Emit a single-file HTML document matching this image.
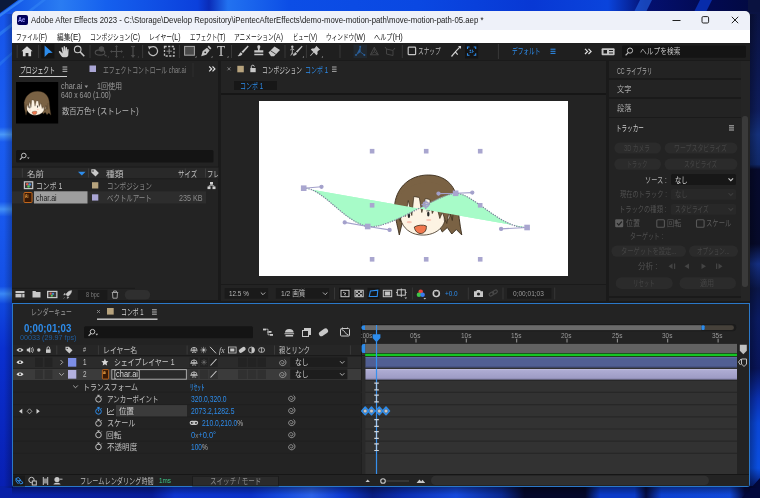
<!DOCTYPE html>
<html lang="ja">
<head>
<meta charset="utf-8">
<title>Adobe After Effects 2023</title>
<style>
*{box-sizing:border-box;margin:0;padding:0}
html,body{width:760px;height:498px;overflow:hidden;background:#0a3bd0}
body{position:relative;font-family:"Liberation Sans","Noto Sans CJK JP",sans-serif;font-size:8px;color:#b4b4b4;line-height:1}
.a{position:absolute}
.t{position:absolute;white-space:nowrap;transform-origin:0 50%;transform:scaleX(.74);line-height:10px;height:10px;font-size:8px}
#wall{position:absolute;left:0;top:0;width:760px;height:498px}
#win{position:absolute;left:12px;top:11px;width:737.6px;height:476px;background:#1a1a1a;border-radius:5px 5px 3px 3px;overflow:hidden}
/* coordinates inside #win are offset by (-12,-11); use #abs wrapper instead */
#abs{position:absolute;left:-12px;top:-11px;width:760px;height:498px;will-change:transform}
#title{left:12px;top:11px;width:738px;height:19px;background:#eef1f9}
#menu{left:12px;top:30px;width:738px;height:12.5px;background:#fff}
#tool{left:12px;top:42.5px;width:738px;height:17.5px;background:#1f1f1f}
.panel{background:#232323}
.m{top:31.5px;color:#111;font-size:8px;transform:scaleX(.76)}
.c{display:flex;justify-content:center;transform-origin:50% 50%;color:#454545;font-size:8.5px}
.r{display:flex;justify-content:flex-end;transform-origin:100% 50%;font-size:8.5px}
.rl{top:330.500px;color:#9a9a9a;font-size:7.500px;transform:scaleX(.8)}
.dim{color:#7d7d7d}
.blue{color:#2d8ceb}
.dk{color:#1a1a1a}
</style>
</head>
<body>
<svg id="wall" viewBox="0 0 760 498">
<defs>
<linearGradient id="gtop" x1="0" x2="1" y1="0" y2="0">
<stop offset="0" stop-color="#0d4fe6"/><stop offset=".08" stop-color="#2a7cf2"/><stop offset=".14" stop-color="#1560ee"/><stop offset=".26" stop-color="#0b40dc"/><stop offset=".275" stop-color="#0a2cb8"/><stop offset=".30" stop-color="#2272f0"/><stop offset=".38" stop-color="#0c4ee6"/><stop offset=".55" stop-color="#0a48e2"/><stop offset=".70" stop-color="#0838d4"/><stop offset=".80" stop-color="#0a44dc"/><stop offset=".85" stop-color="#041070"/><stop offset=".93" stop-color="#020a52"/><stop offset="1" stop-color="#02093f"/>
</linearGradient>
<linearGradient id="gleft" x1="0" x2="0" y1="0" y2="1">
<stop offset="0" stop-color="#1654ea"/><stop offset=".255" stop-color="#1a5cf0"/><stop offset=".27" stop-color="#4a98f8"/><stop offset=".285" stop-color="#1a5cf0"/><stop offset=".405" stop-color="#1858ee"/><stop offset=".42" stop-color="#4290f6"/><stop offset=".435" stop-color="#1858ee"/><stop offset=".575" stop-color="#1450e6"/><stop offset=".59" stop-color="#3a88f6"/><stop offset=".61" stop-color="#1048e0"/><stop offset=".70" stop-color="#0a30d0"/><stop offset="1" stop-color="#081eb0"/>
</linearGradient>
<linearGradient id="gright" x1="0" x2="0" y1="0" y2="1">
<stop offset="0" stop-color="#0a1240"/><stop offset=".15" stop-color="#0c1850"/><stop offset=".22" stop-color="#0e1c5a"/><stop offset=".27" stop-color="#14307a"/><stop offset=".33" stop-color="#102868"/><stop offset=".34" stop-color="#060a2c"/><stop offset=".49" stop-color="#060a2a"/><stop offset=".53" stop-color="#142e80"/><stop offset=".58" stop-color="#0a1648"/><stop offset=".64" stop-color="#0a1a60"/><stop offset=".74" stop-color="#081458"/><stop offset=".80" stop-color="#0a30b0"/><stop offset=".85" stop-color="#0a46d6"/><stop offset=".94" stop-color="#0a4ee0"/><stop offset=".965" stop-color="#082a90"/><stop offset="1" stop-color="#03083c"/>
</linearGradient>
<linearGradient id="gbot" x1="0" x2="1" y1="0" y2="0">
<stop offset="0" stop-color="#0820a8"/><stop offset=".20" stop-color="#081c98"/><stop offset=".23" stop-color="#0c34d0"/><stop offset=".33" stop-color="#0a30c8"/><stop offset=".37" stop-color="#1448dc"/><stop offset=".41" stop-color="#2a60e8"/><stop offset=".45" stop-color="#0c38d0"/><stop offset=".49" stop-color="#081c80"/><stop offset=".53" stop-color="#0a2cb0"/><stop offset=".60" stop-color="#1448dc"/><stop offset=".66" stop-color="#0a2890"/><stop offset=".69" stop-color="#04082a"/><stop offset=".77" stop-color="#04082a"/><stop offset=".79" stop-color="#0a3ac8"/><stop offset=".835" stop-color="#0a3ac8"/><stop offset=".85" stop-color="#050c40"/><stop offset=".87" stop-color="#0c40d0"/><stop offset=".96" stop-color="#1048d8"/><stop offset=".98" stop-color="#03083c"/><stop offset="1" stop-color="#02083c"/>
</linearGradient>
<linearGradient id="shl" x1="0" x2="1"><stop offset="0" stop-color="#000" stop-opacity="0"/><stop offset="1" stop-color="#000" stop-opacity=".28"/></linearGradient>
<linearGradient id="shb" x1="0" x2="0" y1="0" y2="1"><stop offset="0" stop-color="#000" stop-opacity=".35"/><stop offset="1" stop-color="#000" stop-opacity="0"/></linearGradient>
</defs>
<rect x="0" y="0" width="760" height="498" fill="#0a3ed6"/>
<rect x="0" y="0" width="14" height="498" fill="url(#gleft)"/>
<rect x="748" y="0" width="12" height="498" fill="url(#gright)"/>
<rect x="0" y="0" width="760" height="12" fill="url(#gtop)"/>
<rect x="0" y="486" width="760" height="12" fill="url(#gbot)"/>
<polygon points="0,0 18,0 0,13" fill="#0b1a3c"/>
<polygon points="20,0 24,0 0,17 0,14" fill="#3a8af6" opacity=".8"/>
<polygon points="42,0 46,0 0,36 0,32" fill="#2f80f4" opacity=".7"/>
<polygon points="0,62 14,50 14,53 0,66" fill="#2a78f0" opacity=".6"/>
<polygon points="748,0 760,0 760,12 748,12" fill="#0a1240"/>
<polygon points="700,0 712,0 706,12 694,12" fill="#0a34c0" opacity=".8"/>
<polygon points="640,0 652,0 646,12 634,12" fill="#2468ea" opacity=".6"/>
<polygon points="742,498 760,478 760,498" fill="#02083c"/>
<rect x="4" y="14" width="9" height="474" fill="url(#shl)"/>
<rect x="12" y="487" width="738" height="8" fill="url(#shb)"/>
<rect x="750" y="14" width="8" height="474" fill="url(#shl)" transform="rotate(180 754 251)"/>

</svg>
<svg width="0" height="0" style="position:absolute"><defs>
<g id="head">
<path d="M5 60.500C3 50 -.5 40 .5 29C3 12 16 .5 34 .5C50 .5 61 10 63 26C64 38 65.500 50 67.500 60.500L62 55L57.500 59.500L53 53L48 57.500L44 50L8 48Z" fill="#7a6244" stroke="#3a2c1c" stroke-width=".9" stroke-linejoin="round"/>
<path d="M5.500 34C4.500 44 8 53 16 57.500C22 61 31 61.500 38 59C45 56.500 50 51 51 44L50 26L12 20Z" fill="#fdf3e3" stroke="#3a2c1c" stroke-width=".8"/>
<path d="M50 38.500C53 36.500 56 38.500 55.500 42C55 45 52 47 50 46Z" fill="#fdf3e3" stroke="#3a2c1c" stroke-width=".8"/>
<path d="M1 30C4 17 18 8 34 8C49 8 59 17 60 30L58 46L55 36L52.500 49L48 38L45.500 44L42 30L38 39L35.500 25L31 24L27.500 38L25 23L19.500 22L17.500 41L14 26L11 42L8 33L6 47L3.500 40Z" fill="#7a6244"/>
<path d="M60 30L58 46L55 36L52.500 49L48 38L45.500 44L42 30L38 39L35.500 25L31 24L27.500 38L25 23L19.500 22L17.500 41L14 26L11 42L8 33L6 47L3.500 40L1 30" fill="none" stroke="#3a2c1c" stroke-width=".7" stroke-linejoin="round"/>
<ellipse cx="14.600" cy="41" rx="1.200" ry="2.600" fill="#262626"/><ellipse cx="34" cy="39.500" rx="1.200" ry="2.600" fill="#262626"/>
<path d="M12.500 37.800l3.500-.8M32 36.500l3.800-.5" stroke="#262626" stroke-width=".7"/>
<ellipse cx="15" cy="47.700" rx="2.600" ry="1.100" fill="#f7b9a8" opacity=".8"/><ellipse cx="34.400" cy="45.500" rx="2.600" ry="1.100" fill="#f7b9a8" opacity=".8"/>
<path d="M20 52.500C23 50.500 29 50 32 51.500C32.500 55.500 30.500 58.500 27 59C23.500 59.500 20.500 56.500 20 52.500Z" fill="#f2784e" stroke="#3a2c1c" stroke-width=".8"/>
</g>
</defs></svg>
<div id="win"><div id="abs">
<div id="title" class="a"></div>
<div id="menu" class="a"></div>
<div id="tool" class="a"></div>
<div class="a" style="left:17px;top:15px;width:10.5px;height:10px;background:#00005b;border-radius:2px"></div>
<div id="t1" class="t" style="left:18.2px;top:15px;font-size:7px;font-weight:bold;color:#9a9aff;transform:scaleX(.82);letter-spacing:-.2px">Ae</div>
<div class="t" id="ttl" style="left:31px;top:15.5px;font-size:8.2px;color:#1b1b1b;transform:scaleX(.952)">Adobe After Effects 2023 - C:\Storage\Develop Repository\iPentecAfterEffects\demo-move-motion-path\move-motion-path-05.aep *</div>
<svg class="a" style="left:665px;top:11px" width="85" height="19" viewBox="0 0 85 19"><g fill="none" stroke="#222" stroke-width="1"><path d="M7.5 9.5h8"/><rect x="37" y="5.6" width="6.6" height="6.4" rx="1.2"/><path d="M66.8 5.8l6.4 6.4M73.2 5.8l-6.4 6.4"/></g></svg>
<!--TITLE-->
<div id="t3" class="t m" style="left:15.8px;;transform:scaleX(0.701)">ファイル<span style="font-size:9.6px">(F)</span></div>
<div id="t4" class="t m" style="left:56.6px;;transform:scaleX(0.830)">編集<span style="font-size:9.6px">(E)</span></div>
<div id="t5" class="t m" style="left:89.5px;;transform:scaleX(0.721)">コンポジション<span style="font-size:9.6px">(C)</span></div>
<div id="t6" class="t m" style="left:149.0px;;transform:scaleX(0.724)">レイヤー<span style="font-size:9.6px">(L)</span></div>
<div id="t7" class="t m" style="left:189.5px;;transform:scaleX(0.679)">エフェクト<span style="font-size:9.6px">(T)</span></div>
<div id="t8" class="t m" style="left:234.4px;;transform:scaleX(0.715)">アニメーション<span style="font-size:9.6px">(A)</span></div>
<div id="t9" class="t m" style="left:292.5px;;transform:scaleX(0.658)">ビュー<span style="font-size:9.6px">(V)</span></div>
<div id="t10" class="t m" style="left:325.8px;;transform:scaleX(0.707)">ウィンドウ<span style="font-size:9.6px">(W)</span></div>
<div id="t11" class="t m" style="left:374.2px;;transform:scaleX(0.772)">ヘルプ<span style="font-size:9.6px">(H)</span></div>
<!--MENU-->
<svg class="a" style="left:12px;top:42px" width="738" height="19" viewBox="12 42 738 19">
<g stroke="#383838" stroke-width="1" fill="none">
<path d="M17.2 45v13M38.6 45v13M90 45v13M142.6 45v13M179.4 45v13M231.5 45v13M285 45v13M306.4 45v13M340 45v13M402.3 45v13M498.4 44v15"/>
</g>
<!-- home -->
<path d="M27 46.3l5.6 5h-1.5v4.9h-2.7v-3.2h-2.8v3.2h-2.7v-4.9h-1.5z" fill="#d6d6d6"/>
<!-- selection -->
<rect x="41.2" y="44" width="13.2" height="14.5" fill="#141414"/>
<path d="M44.6 45.5L52.7 52.8L48.6 53L44.6 57.1Z" fill="#2d8ceb"/>
<!-- hand -->
<path d="M60.3 51.2c-.9-.6-1.9.2-1.3 1.2l2.300 3.600c.5.8 1.300 1.200 2.200 1.200h2.600c1.300 0 2.100-.9 2.200-2.200l.3-5.200c.1-1-1.200-1.100-1.300-.1l-.2 2.100l-.1-4.100c0-1-1.400-1-1.400 0l-.1 3.600l-.5-4.500c-.1-1-1.500-.9-1.400.1l.2 4.500l-.9-3.700c-.2-.9-1.500-.6-1.300.3l1 5.400z" fill="#cfcfcf"/>
<!-- zoom -->
<circle cx="77.700" cy="49.400" r="3.300" fill="none" stroke="#c8c8c8" stroke-width="1.100"/><path d="M80.200 52l4.100 4.300" stroke="#c8c8c8" stroke-width="1.600"/>
<!-- orbit dim -->
<g fill="none" stroke="#4c4c4c" stroke-width="1.100"><ellipse cx="100" cy="52.500" rx="4.800" ry="2.600"/><circle cx="101.500" cy="49" r="2.200" fill="#4c4c4c"/><path d="M104.500 54.800l2 1.500"/></g>
<g stroke="#4c4c4c" stroke-width="1.200" fill="#4c4c4c"><path d="M116.500 46v11M111 51.500h11"/><path d="M116.500 45l1.500 2h-3zM116.500 58l1.500-2h-3zM110 51.500l2-1.500v3zM123 51.500l-2-1.500v3z" stroke="none"/></g>
<g stroke="#4c4c4c" stroke-width="1.200" fill="#4c4c4c"><path d="M133 46v10"/><path d="M133 58l2.200-3h-4.400z" stroke="none"/><path d="M131 46.500h4" /></g>
<path d="M107.500 57.500h1.500v-1.500zM122.500 57.500h1.500v-1.500zM137.500 57.500h1.500v-1.500z" fill="#4c4c4c"/>
<!-- rotate -->
<path d="M150.200 47.600a4.500 4.500 0 1 1 -1.600 3.900" fill="none" stroke="#bdbdbd" stroke-width="1.200"/><path d="M148 46.200l3.600.3l-2.300 2.900z" fill="#bdbdbd"/>
<!-- pan behind -->
<rect x="164.500" y="46.500" width="9.500" height="9.500" fill="none" stroke="#c0c0c0" stroke-width="1.300" stroke-dasharray="2.200 1.400"/><path d="M166.500 51.200h5.500M169.200 48.500v5.500" stroke="#8a8a8a" stroke-width="1"/>
<!-- rect -->
<rect x="184.600" y="46.400" width="9.800" height="8.800" fill="#4a4a4a" stroke="#a8a8a8" stroke-width="1"/><path d="M195 57.500h1.500v-1.500z" fill="#aaa"/>
<!-- pen -->
<path d="M201.200 56.300l1.500-5.300l4.300-3.300l2.600 2.700l-3.300 4.300zM207.600 46.800l1.200-1.200l2.600 2.700l-1.200 1.200z" fill="#c4c4c4"/><circle cx="205.200" cy="52.300" r=".9" fill="#1f1f1f"/><path d="M211 57.500h1.500v-1.500z" fill="#aaa"/>
<path d="M227 57.500h1.500v-1.500z" fill="#aaa"/>
<!-- brush -->
<path d="M247.800 45.600l.9.800l-5.600 6.600l-1.600-1.300zM240.700 52.300l1.800 1.500c-.4 1.700-2.400 2.500-5 2.300c1.700-.6 1.700-2.700 3.200-3.800z" fill="#c8c8c8"/>
<!-- stamp -->
<path d="M257.300 46.500c0-1.700 3-1.700 3 0c0 1.200-.8 2.400-.8 3.800h3.800v2.200h-9v-2.200h3.800c0-1.400-.8-2.600-.8-3.800zM254.300 53.800h9v1.500h-9z" fill="#c8c8c8"/>
<!-- eraser -->
<path d="M268.500 52.600l6-6.200l5.500 3.600l-6 6.200h-3z" fill="#c8c8c8"/><path d="M270.500 50.700l5.300 3.500" stroke="#1f1f1f" stroke-width=".8"/>
<!-- roto -->
<path d="M301.800 45.800l.8.700l-5.200 6.200l-1.500-1.200zM295.200 52l1.700 1.400c-.4 1.500-2 2.200-4.200 2c1.300-.6 1.300-2.300 2.500-3.400z" fill="#c0c0c0"/><circle cx="292.300" cy="46.800" r="1.200" fill="#c0c0c0"/><path d="M290.300 50l2-1.500l2 1.500M292.300 48.500v4l-1.500 3M292.300 52.500l1.500 3" stroke="#c0c0c0" stroke-width=".9" fill="none"/><path d="M302.500 57.500h1.500v-1.500z" fill="#aaa"/>
<!-- pin -->
<path d="M316.200 45.800l4 4l-1.300.5l-1.500 1.500l.2 2.200l-1.200 1.200l-2.500-2.600l-3.200 3.400l-.6-.5l3.200-3.400l-2.500-2.500l1.200-1.200l2.200.2l1.500-1.500z" fill="#c8c8c8"/><path d="M321.500 57.500h1.500v-1.500z" fill="#aaa"/>
<!-- axis modes -->
<rect x="353.400" y="44.500" width="13.600" height="13.600" fill="#232f3d" opacity=".55"/>
<g stroke="#2a5f9a" stroke-width=".8" fill="#2a5f9a"><path d="M360.200 47v4.800l-4 3M360.200 51.800l4 3"/><circle cx="360.200" cy="46.800" r="1" stroke="none"/><circle cx="356" cy="55" r="1" stroke="none"/><circle cx="364.400" cy="55" r="1" stroke="none"/></g>
<g stroke="#444" stroke-width="1" fill="none"><path d="M374.300 47v4.800l-4 3M374.300 51.800l4 3M370.300 54.800l4-7.500l4 7.500z"/></g>
<g stroke="#444" stroke-width="1" fill="none"><path d="M386.500 49l6.500 1.500v5l-6.500-1.500zM393 50.500l2-2.500M386.500 49l-1.500-2"/></g>
<!-- snap -->
<rect x="408.200" y="47.100" width="7.400" height="7.600" fill="none" stroke="#c4c4c4" stroke-width="1.200" rx=".8"/>
<path d="M451.500 56.500l3.800-4.600l2.400 2.800M455.300 51.900l4.500-4.800" fill="none" stroke="#d0d0d0" stroke-width="1.200"/><path d="M458 46h3v3z" fill="#d0d0d0"/>
<rect x="465" y="44" width="13.200" height="14.500" fill="#141414"/>
<g fill="none" stroke="#2d8ceb" stroke-width="1.100"><path d="M467.500 49v-2h2M473.700 47h2v2M475.700 53.300v2h-2M469.500 55.300h-2v-2"/><path d="M470.200 50.200h2.800v2.200h-2.800z" stroke-dasharray="1 .8"/></g>
<!-- workspace -->
<path d="M550.500 49.200h5M550.500 51.300h5M550.500 53.400h5" stroke="#2d8ceb" stroke-width="1"/>
<path d="M585 48.800l2.600 2.600l-2.600 2.600M588.500 48.800l2.600 2.600l-2.600 2.600" fill="none" stroke="#e0e0e0" stroke-width="1.200"/>
<rect x="601.600" y="48.300" width="13" height="7" rx="1" fill="#c6c6c6"/><rect x="603.500" y="50" width="3.500" height="3.500" fill="#1f1f1f"/><path d="M609 50.500h4M609 53h4" stroke="#1f1f1f" stroke-width="1"/>
<rect x="622" y="45.500" width="124" height="12.200" rx="1.500" fill="#141414"/>
<circle cx="630" cy="50.600" r="2.600" fill="none" stroke="#c0c0c0" stroke-width="1"/><path d="M628.200 52.600l-2.600 2.800" stroke="#c0c0c0" stroke-width="1.200"/>
</svg>
<div id="t12" class="t" style="left:216.500px;top:44.500px;font-family:'Liberation Serif',serif;font-size:14px;line-height:14px;height:14px;color:#cfcfcf;transform:scaleX(.95)">T</div>
<div id="t13" class="t" style="left:417.6px;top:46.300px;color:#b8b8b8;font-size:8.500px;transform:scaleX(0.667)">スナップ</div>
<div id="t14" class="t blue" style="left:512.4px;top:46.300px;font-size:8.500px;transform:scaleX(0.668)">デフォルト</div>
<div id="t15" class="t" style="left:640.3px;top:46.300px;color:#c0c0c0;font-size:8.500px;transform:scaleX(0.794)">ヘルプを検索</div>
<!--TOOLBAR-->
<div class="a panel" style="left:12px;top:61px;width:206.200px;height:239px"></div>
<!-- tab row -->
<div id="t16" class="t" style="left:20.0px;top:64.500px;color:#d8d8d8;font-size:8.500px;transform:scaleX(0.686)">プロジェクト</div>
<div class="a" style="left:19px;top:76px;width:48px;height:1.200px;background:#d0d0d0"></div>
<svg class="a" style="left:12px;top:61px" width="207" height="240" viewBox="12 61 207 240">
<path d="M62.500 67h4.800M62.500 69.200h4.800M62.500 71.400h4.800" stroke="#b8b8b8" stroke-width="1"/>
<rect x="89.500" y="65.500" width="6.500" height="6.500" fill="#a9a5d4"/>
<path d="M193 63v14" stroke="#2e2e2e" stroke-width="1"/>
<path d="M209.200 66.500l2.400 2.400l-2.400 2.400M212.500 66.500l2.400 2.400l-2.400 2.400" fill="none" stroke="#e0e0e0" stroke-width="1.200"/>
<!-- thumbnail -->
<rect x="16" y="82" width="42.200" height="41.500" fill="#000"/>
<g transform="translate(24,91) scale(.4)"><use href="#head"/></g>
<path d="M84.500 85.500h3.600l-1.800 2.400z" fill="#9a9a9a"/>
<!-- search -->
<rect x="16" y="150" width="197.500" height="12.500" rx="1.500" fill="#141414"/>
<circle cx="23.800" cy="155.500" r="2.300" fill="none" stroke="#c0c0c0" stroke-width="1"/><path d="M22.200 157.300l-2.300 2.400" stroke="#c0c0c0" stroke-width="1.100"/><path d="M27 157.500h2.600l-1.300 1.600z" fill="#c0c0c0"/>
<!-- header -->
<rect x="12" y="166.600" width="206.500" height="12.600" fill="#191919"/><rect x="12" y="167.500" width="206.500" height="10.900" fill="#292929"/>
<path d="M22.300 168.500v9M88.500 168.500v9M185.300 168.500v9M205.500 168.500v9" stroke="#3c3c3c" stroke-width="1"/>
<path d="M78 171.800h7.600l-3.800 3.700z" fill="#2d8ceb"/>
<path d="M91.300 169.200h3.800l3.800 3.800l-3.400 3.400l-4.200-3.800z" fill="#c8c8c8"/><circle cx="93" cy="171" r=".8" fill="#292929"/>
<!-- row 2 highlight -->
<rect x="12" y="191.300" width="194" height="12.200" fill="#2d2d2d"/>
<rect x="34" y="191.300" width="53.500" height="12.200" fill="#9e9e9e"/>
<!-- comp icon -->
<rect x="23.800" y="181.200" width="9.500" height="8" fill="#c8c8c8"/><rect x="25" y="182.400" width="7.100" height="5.600" fill="#3b3b3b"/><circle cx="27.300" cy="184.300" r="1.300" fill="#e05a4a"/><circle cx="29.800" cy="184.500" r="1.300" fill="#4a8de0"/><circle cx="28.500" cy="186.500" r="1.300" fill="#5ac45a"/>
<!-- ai icon -->
<rect x="24" y="192.500" width="8" height="10" rx="1" fill="#3a1a06" stroke="#e8791d" stroke-width=".8"/>
<rect x="92" y="182.200" width="6.300" height="6.300" fill="#b7a37d"/>
<rect x="92" y="194.300" width="6.300" height="6.300" fill="#a9a5d4"/>
<!-- flowchart icon -->
<g fill="#d0d0d0"><rect x="210" y="182" width="3" height="2.600"/><rect x="207.500" y="186.500" width="3" height="2.600"/><rect x="212.500" y="186.500" width="3" height="2.600"/><path d="M211.200 184.500v1.200h-2.200v1h.6M211.800 184.500v1.200h2.200v1" stroke="#d0d0d0" stroke-width=".7" fill="none"/></g>
<!-- footer -->
<path d="M12 288.300h123" stroke="#1a1a1a" stroke-width="1"/>
<g fill="#c8c8c8">
<rect x="15.500" y="291" width="9" height="2.200"/><rect x="15.500" y="294" width="6" height="3.400"/><rect x="22.300" y="294" width="2.200" height="3.400"/>
<path d="M32.500 291h3l.8 1h4.200v5.600h-8z"/>
<rect x="47" y="290.800" width="10.500" height="7.400"/>
<path d="M71.500 290.500c-2.600.2-4.500 1.800-5.600 4l1.800 1.800c2.200-1.100 3.800-3 4-5.600zM65.300 294.800l-1.700.3l1.300-2zM67.400 296.900l-.3 1.700l2-1.300zM64.800 297.200l-1.300 1.500" stroke="#c8c8c8" stroke-width=".4"/>
</g>
<rect x="48.300" y="292" width="7.900" height="5" fill="#3b3b3b"/><circle cx="50.700" cy="293.700" r="1.100" fill="#e05a4a"/><circle cx="53" cy="293.800" r="1.100" fill="#4a8de0"/><circle cx="51.800" cy="295.700" r="1.100" fill="#5ac45a"/>
<rect x="77.800" y="289.800" width="29.500" height="10" fill="#1a1a1a"/>
<g fill="none" stroke="#a0a0a0" stroke-width="1"><path d="M111.800 292.500h6.400M113.600 292.300v-1.300h2.800v1.300M112.500 292.800l.4 5.400h4.200l.4-5.400"/></g>
<rect x="124.700" y="290" width="25.500" height="9.600" rx="4.800" fill="#2f2f2f"/>
</svg>
<div id="t17" class="t dim" style="left:103.0px;top:64.500px;font-size:8.500px;color:#858585;transform:scaleX(0.686)">エフェクトコントロール char.ai</div>
<div id="t18" class="t" style="left:61.2px;top:80.500px;color:#9a9a9a;font-size:8.500px;transform:scaleX(0.858)">char.ai</div>
<div id="t19" class="t" style="left:96.8px;top:80.500px;color:#9a9a9a;font-size:8.500px;transform:scaleX(0.833)">1回使用</div>
<div id="t20" class="t" style="left:61.2px;top:89.500px;color:#9a9a9a;font-size:8.500px;transform:scaleX(0.804)">640 x 640 (1.00)</div>
<div id="t21" class="t" style="left:62.0px;top:105.500px;color:#b8b8b8;font-size:8.500px;transform:scaleX(0.858)">数百万色+ (ストレート)</div>
<div id="t22" class="t" style="left:26.7px;top:168.500px;color:#c0c0c0;font-size:8.500px;transform:scaleX(0.987)">名前</div>
<div id="t23" class="t" style="left:106.0px;top:168.500px;color:#c0c0c0;font-size:8.500px;transform:scaleX(1.034)">種類</div>
<div id="t24" class="t" style="left:177.9px;top:168.500px;color:#c0c0c0;font-size:8.500px;transform:scaleX(0.756)">サイズ</div>
<div id="t25" class="t" style="left:207px;top:168.500px;color:#c0c0c0;font-size:8.500px;width:15px;overflow:hidden">フレ</div>
<div id="t26" class="t" style="left:35.8px;top:180.800px;color:#c4c4c4;font-size:8.500px;transform:scaleX(0.804)">コンポ 1</div>
<div id="t27" class="t" style="left:106.7px;top:180.800px;color:#8c8c8c;font-size:8.500px;transform:scaleX(0.753)">コンポジション</div>
<div id="t28" class="t" style="left:36.4px;top:193px;color:#1c1c1c;font-size:8.500px;transform:scaleX(0.822)">char.ai</div>
<div id="t29" class="t" style="left:106.7px;top:193px;color:#8c8c8c;font-size:8.500px;transform:scaleX(0.759)">ベクトルアート</div>
<div id="t30" class="t" style="left:178.8px;top:193px;color:#8c8c8c;font-size:8.500px;transform:scaleX(0.846)">235 KB</div>
<div id="t31" class="t" style="left:25.300px;top:193.500px;color:#ffb04a;font-size:4.500px;font-weight:bold;line-height:6px;height:6px">Ai</div>
<div id="t32" class="t" style="left:85.8px;top:290px;color:#7a7a7a;font-size:7px;transform:scaleX(0.794)">8 bpc</div>
<!--PROJECT-->
<div class="a panel" style="left:220.500px;top:61px;width:385.500px;height:239.500px"></div>
<div class="a" style="left:220.500px;top:93px;width:385.500px;height:1.500px;background:#161616"></div>
<div class="a" style="left:220.500px;top:284px;width:385.500px;height:1.200px;background:#1a1a1a"></div>
<div class="a" style="left:234px;top:80.700px;width:43px;height:9.800px;background:#171717"></div>
<div class="a" style="left:258.500px;top:101px;width:309.300px;height:174.700px;background:#fff"></div>
<svg class="a" style="left:220px;top:61px" width="386" height="240" viewBox="220 61 386 240">
<path d="M227.500 67.300l3 3M230.500 67.300l-3 3" stroke="#8a8a8a" stroke-width=".9"/>
<rect x="237.300" y="65.800" width="6.500" height="6.500" fill="#b7a37d"/>
<rect x="250.300" y="68" width="5.400" height="4.200" fill="#c8c8c8"/><path d="M251.300 68v-1.300a1.500 1.500 0 0 1 3 0" fill="none" stroke="#c8c8c8" stroke-width=".9"/>
<path d="M332 67h4.600M332 69.200h4.600M332 71.400h4.600" stroke="#a8a8a8" stroke-width="1"/>
<!-- motion path shape -->
<path d="M303.700 188.200C321.500 186.800 344.700 222.400 367.700 226.500C389.600 229.900 438.500 193.600 455.600 193.300C472.300 192.600 501.100 228.900 527.100 227.500Z" fill="#a7fbc8"/>
<!-- head -->
<g transform="translate(394.300,174.500)"><use href="#head"/></g>
<path d="M303.700 188.200C321.500 186.800 344.700 222.400 367.700 226.500C389.600 229.900 438.500 193.600 455.600 193.300C472.300 192.600 501.100 228.900 527.100 227.500Z" fill="#a7fbc8" opacity=".0"/>
<path d="M303.700 188.200C321.500 186.800 344.700 222.400 367.700 226.500C389.600 229.900 438.500 193.600 455.600 193.300C472.300 192.600 501.100 228.900 527.100 227.500Z" fill="#a7fbc8"/>
<path d="M303.700 188.200C321.500 186.800 344.700 222.400 367.700 226.500C389.600 229.900 438.500 193.600 455.600 193.300C472.300 192.600 501.100 228.900 527.100 227.500" fill="none" stroke="#807e9e" stroke-width="1.200" stroke-dasharray="1.300 1.100"/>
<g stroke="#a3a0cb" stroke-width="1.100" fill="#a3a0cb">
<path d="M303.700 188.200L321.500 186.800M344.700 222.400L367.700 226.500L389.600 229.900M438.500 193.600L455.600 193.300L472.300 192.600M501.100 228.900L527.100 227.500" fill="none"/>
<circle cx="321.500" cy="186.800" r="1.600"/><circle cx="344.700" cy="222.400" r="1.600"/><circle cx="389.600" cy="229.900" r="1.600"/><circle cx="438.500" cy="193.600" r="1.600"/><circle cx="472.300" cy="192.600" r="1.600"/><circle cx="501.100" cy="228.900" r="1.600"/>
</g>
<g fill="#a9a6cf">
<rect x="300.900" y="185.400" width="5.600" height="5.600"/><rect x="364.900" y="223.700" width="5.600" height="5.600"/><rect x="452.800" y="190.500" width="5.600" height="5.600"/><rect x="524.300" y="224.700" width="5.600" height="5.600"/>
<rect x="369.800" y="148.900" width="4.600" height="4.600"/><rect x="423.900" y="148.900" width="4.600" height="4.600"/><rect x="477.900" y="148.900" width="4.600" height="4.600"/>
<rect x="369.800" y="203" width="4.600" height="4.600"/><rect x="477.900" y="203" width="4.600" height="4.600"/>
<rect x="369.800" y="257" width="4.600" height="4.600"/><rect x="423.900" y="257" width="4.600" height="4.600"/><rect x="477.900" y="257" width="4.600" height="4.600"/>
</g>
<g fill="none" stroke="#a19ec8" stroke-width="1.300"><circle cx="425.800" cy="204.600" r="2.600"/><path d="M425.800 200.300v8.600M421.500 204.600h8.600"/></g>
<!-- footer -->
<rect x="224.700" y="288.200" width="43.500" height="10.500" fill="#1a1a1a"/>
<rect x="275.800" y="288.200" width="53.400" height="10.500" fill="#1a1a1a"/>
<path d="M260.800 292.500l2.200 2.200l2.200-2.200M323 292.500l2.200 2.200l2.200-2.200" fill="none" stroke="#b0b0b0" stroke-width="1"/>
<path d="M334.500 287.500v12M412.400 287.500v12M468.300 287.500v12M503 287.500v12M554.700 287.500v12" stroke="#363636" stroke-width="1"/>
<rect x="339" y="287.800" width="12" height="11.200" fill="#161616"/>
<rect x="367.500" y="287.800" width="12" height="11.200" fill="#161616"/>
<g fill="none" stroke="#c8c8c8" stroke-width="1">
<rect x="341" y="290.300" width="8" height="6.400"/><path d="M343 292.200l3 1.300l-1.500.5l.8 1.500" stroke-width=".8"/>
<rect x="355" y="290.300" width="8.200" height="6.400"/>
<rect x="383.300" y="290.300" width="8.400" height="6.400"/><rect x="385.300" y="292" width="4.400" height="3" fill="#c8c8c8"/>
<rect x="397.300" y="289.800" width="8" height="5.400"/><path d="M401.300 288.500v8.500M396 292.500h1.300M405.300 292.500h1.300" stroke-width=".9"/>
</g>
<g fill="#c8c8c8"><rect x="356" y="291.200" width="2" height="1.600"/><rect x="360" y="291.200" width="2" height="1.600"/><rect x="358" y="292.800" width="2" height="1.600"/><rect x="356" y="294.300" width="2" height="1.600"/><rect x="360" y="294.300" width="2" height="1.600"/></g>
<path d="M369.200 296.500l1.200-5.500l7.400-.8l-.6 6.300z" fill="none" stroke="#2d8ceb" stroke-width="1.100"/>
<path d="M404.500 297.500h2.600l-1.300 1.500z" fill="#c8c8c8"/>
<circle cx="420.700" cy="291.800" r="2.300" fill="#e8433a"/><circle cx="419" cy="294.800" r="2.300" fill="#3fc64a"/><circle cx="422.600" cy="294.800" r="2.300" fill="#3b7cf0"/><path d="M423.500 298h2.600l-1.300 1.500z" fill="#c8c8c8"/>
<circle cx="436.300" cy="293.500" r="3" fill="none" stroke="#c8c8c8" stroke-width="1.600"/><path d="M434.500 291.500l2 2M438.500 292l-2.500 1.500M436 296l.5-2.500" stroke="#232323" stroke-width=".7"/>
<path d="M474 291.300h2.200l.8-1.200h3l.8 1.200h2.200v5.700h-9z" fill="#c8c8c8"/><circle cx="478.500" cy="294" r="1.600" fill="#232323"/>
<g fill="none" stroke="#484848" stroke-width="1.200"><rect x="489" y="292.500" width="5" height="3" rx="1.500" transform="rotate(-35 491.500 294)"/><rect x="492.500" y="290.500" width="5" height="3" rx="1.500" transform="rotate(-35 495 292)"/></g>
<rect x="507.200" y="288.200" width="44.200" height="10.500" fill="#1a1a1a"/>
</svg>
<div id="t33" class="t" style="left:262.0px;top:64.500px;color:#c8c8c8;font-size:8.500px;transform:scaleX(0.672)">コンポジション</div>
<div id="t34" class="t blue" style="left:304.7px;top:64.500px;font-size:8.500px;transform:scaleX(0.706)">コンポ 1</div>
<div id="t35" class="t blue" style="left:240.0px;top:80.600px;font-size:8.500px;transform:scaleX(0.706)">コンポ 1</div>
<div id="t36" class="t" style="left:229.2px;top:288.500px;color:#b8b8b8;font-size:8px;transform:scaleX(0.795)">12.5 %</div>
<div id="t37" class="t" style="left:281.0px;top:288.500px;color:#b8b8b8;font-size:8px;transform:scaleX(0.835)">1/2 画質</div>
<div id="t38" class="t blue" style="left:444.8px;top:288.500px;font-size:8px;transform:scaleX(0.804)">+0.0</div>
<div id="t39" class="t" style="left:513.3px;top:288.500px;color:#9a9a9a;font-size:8px;transform:scaleX(0.817)">0;00;01;03</div>
<!--COMP-->
<div class="a panel" style="left:608.500px;top:61px;width:132.500px;height:17.200px"></div>
<div class="a panel" style="left:608.500px;top:79.800px;width:132.500px;height:17.700px"></div>
<div class="a panel" style="left:608.500px;top:99.100px;width:132.500px;height:17.700px"></div>
<div class="a panel" style="left:608.500px;top:118.400px;width:132.500px;height:177.900px"></div>
<div class="a" style="left:741px;top:61px;width:9px;height:239.500px;background:#252525"></div>
<div class="a" style="left:742.300px;top:116px;width:5.400px;height:171px;background:#3a3a3a;border-radius:2.700px"></div>
<div class="a" style="left:608.500px;top:297.500px;width:132.500px;height:3px;background:#232323"></div>
<svg class="a" style="left:608px;top:61px" width="142" height="240" viewBox="608 61 142 240">
<path d="M729 125.800h5M729 127.900h5M729 130h5" stroke="#b8b8b8" stroke-width="1"/>
<g fill="#2b2b2b">
<rect x="614.300" y="142.400" width="46.700" height="11.200" rx="5.600"/><rect x="664.600" y="142.400" width="72.800" height="11.200" rx="5.600"/>
<rect x="614.300" y="158.600" width="46.700" height="11.200" rx="5.600"/><rect x="664.600" y="158.600" width="72.800" height="11.200" rx="5.600"/>
<rect x="611.400" y="245.500" width="74.600" height="11.300" rx="5.600"/><rect x="689" y="245.500" width="49" height="11.300" rx="5.600"/>
<rect x="615.700" y="277.300" width="57" height="11.800" rx="5.900"/><rect x="679.500" y="277.300" width="56.500" height="11.800" rx="5.900"/>
</g>
<rect x="671" y="174" width="65" height="11" rx="1.500" fill="#171717"/>
<rect x="671" y="189" width="65" height="10.800" rx="1.500" fill="#282828"/>
<rect x="671" y="203.900" width="65" height="10.800" rx="1.500" fill="#282828"/>
<path d="M728.500 178.300l2.300 2.300l2.300-2.300" fill="none" stroke="#c8c8c8" stroke-width="1.100"/>
<path d="M728.500 193.200l2.300 2.300l2.300-2.300M728.500 208.100l2.300 2.300l2.300-2.300" fill="none" stroke="#3c3c3c" stroke-width="1.100"/>
<rect x="615.200" y="219.300" width="8" height="8" rx="1" fill="#5e5e5e"/><path d="M617 223.200l1.800 1.900l3-3.600" fill="none" stroke="#232323" stroke-width="1.200"/>
<rect x="656.800" y="219.700" width="7.600" height="7.600" rx="1" fill="none" stroke="#585858" stroke-width="1.100"/>
<rect x="696.500" y="219.700" width="7.600" height="7.600" rx="1" fill="none" stroke="#585858" stroke-width="1.100"/>
<g fill="#444"><path d="M672.500 263.500v5.600l-4-2.800zM674 263.500h1.200v5.600h-1.200z"/><path d="M689 263.500v5.600l-4.500-2.800z"/><path d="M701.500 263.500v5.600l4.500-2.800z"/><path d="M718.500 263.500v5.600l4-2.800zM716 263.500h1.200v5.600h-1.200z"/></g>
</svg>
<div id="t40" class="t" style="left:617.0px;top:65.500px;color:#a8a8a8;font-size:8.500px;transform:scaleX(0.618)">CC ライブラリ</div>
<div id="t41" class="t" style="left:617.0px;top:84px;color:#a8a8a8;font-size:8.500px;transform:scaleX(0.846)">文字</div>
<div id="t42" class="t" style="left:617.0px;top:103.300px;color:#a8a8a8;font-size:8.500px;transform:scaleX(0.846)">段落</div>
<div id="t43" class="t" style="left:616.3px;top:122.800px;color:#d0d0d0;font-size:8.500px;transform:scaleX(0.652)">トラッカー</div>
<div id="t44" class="t" style="left:624.4px;top:143px;color:#454545;font-size:8.500px;transform:scaleX(0.669)">3D カメラ</div>
<div id="t45" class="t" style="left:674.0px;top:143px;color:#454545;font-size:8.500px;transform:scaleX(0.698)">ワープスタビライズ</div>
<div id="t46" class="t" style="left:627.0px;top:159.200px;color:#454545;font-size:8.500px;transform:scaleX(0.594)">トラック</div>
<div id="t47" class="t" style="left:683.7px;top:159.200px;color:#454545;font-size:8.500px;transform:scaleX(0.652)">スタビライズ</div>
<div id="t48" class="t" style="left:644.7px;top:174.500px;color:#b0b0b0;font-size:8.500px;transform:scaleX(0.728)">ソース :</div>
<div id="t49" class="t" style="left:675.4px;top:174.500px;color:#d8d8d8;font-size:8.500px;transform:scaleX(0.740)">なし</div>
<div id="t50" class="t" style="left:619.5px;top:189.400px;color:#505050;font-size:8.500px;transform:scaleX(0.730)">現在のトラック :</div>
<div id="t51" class="t" style="left:675.4px;top:189.400px;color:#484848;font-size:8.500px;transform:scaleX(0.740)">なし</div>
<div id="t52" class="t" style="left:619.0px;top:204.300px;color:#505050;font-size:8.500px;transform:scaleX(0.738)">トラックの種類 :</div>
<div id="t53" class="t" style="left:675.4px;top:204.300px;color:#484848;font-size:8.500px;transform:scaleX(0.662)">スタビライズ</div>
<div id="t54" class="t" style="left:626.0px;top:218.400px;color:#5a5a5a;font-size:8.500px;transform:scaleX(0.823)">位置</div>
<div id="t55" class="t" style="left:667.0px;top:218.400px;color:#5a5a5a;font-size:8.500px;transform:scaleX(0.840)">回転</div>
<div id="t56" class="t" style="left:706.0px;top:218.400px;color:#5a5a5a;font-size:8.500px;transform:scaleX(0.747)">スケール</div>
<div id="t57" class="t" style="left:629.8px;top:231.400px;color:#505050;font-size:8.500px;transform:scaleX(0.701)">ターゲット :</div>
<div id="t58" class="t" style="left:620.9px;top:246.200px;color:#454545;font-size:8.500px;transform:scaleX(0.739)">ターゲットを設定...</div>
<div id="t59" class="t" style="left:697.0px;top:246.200px;color:#454545;font-size:8.500px;transform:scaleX(0.655)">オプション...</div>
<div id="t60" class="t" style="left:638.0px;top:261.300px;color:#505050;font-size:8.500px;transform:scaleX(0.897)">分析 :</div>
<div id="t61" class="t" style="left:632.5px;top:278.200px;color:#454545;font-size:8.500px;transform:scaleX(0.638)">リセット</div>
<div id="t62" class="t" style="left:700.3px;top:278.200px;color:#454545;font-size:8.500px;transform:scaleX(0.829)">適用</div>
<!--RIGHT-->
<div class="a" style="left:12px;top:302.600px;width:737.600px;height:184.400px;background:#232323;border:1px solid #2b78c8"></div>
<!-- right track area -->
<div class="a" style="left:361.500px;top:344.500px;width:375.500px;height:129.500px;background:#323232"></div>
<div class="a" style="left:13px;top:474px;width:736px;height:1px;background:#161616"></div>
<div class="a" style="left:360.500px;top:321px;width:1px;height:154px;background:#161616"></div>
<!-- left rows -->
<div class="a" style="left:13px;top:344.500px;width:347.500px;height:10.500px;background:#262626"></div>
<div class="a" style="left:13px;top:355.200px;width:724px;height:1.300px;background:#1a1a1a"></div>
<div class="a" style="left:13px;top:357px;width:347.500px;height:10.500px;background:#2b2b2b"></div>
<div class="a" style="left:13px;top:369px;width:347.500px;height:10.700px;background:#3b3b3b"></div>
<div class="a" style="left:116.300px;top:405.400px;width:70.500px;height:11.200px;background:#3b3b3b"></div>
<svg class="a" style="left:12px;top:303px" width="738" height="185" viewBox="12 303 738 185">
<!-- tabs -->
<path d="M97 310l3 3M100 310l-3 3" stroke="#8a8a8a" stroke-width=".9"/>
<rect x="107" y="308" width="6.700" height="6.600" fill="#b7a37d"/>
<path d="M152 309.800h4.800M152 312h4.800M152 314.200h4.800" stroke="#b8b8b8" stroke-width="1"/>
<rect x="97" y="318.500" width="60.500" height="1.400" fill="#cfcfcf"/>
<!-- search -->
<rect x="84" y="326.300" width="169" height="12" rx="1.500" fill="#141414"/>
<circle cx="92.500" cy="331.700" r="2.300" fill="none" stroke="#c0c0c0" stroke-width="1"/><path d="M90.900 333.500l-2.300 2.400" stroke="#c0c0c0" stroke-width="1.100"/><path d="M95.500 333.800h2.600l-1.300 1.600z" fill="#c0c0c0"/>
<!-- controls icons -->
<g fill="#c8c8c8" stroke="none">
<rect x="263" y="328.600" width="3" height="1.800"/><rect x="268.500" y="331" width="3" height="1.800"/><rect x="270" y="334" width="3" height="1.800"/><path d="M266 329.200h2v5.600h2M267 332h1.500" stroke="#c8c8c8" stroke-width=".8" fill="none"/>
<path d="M285 332.500a4.300 3.500 0 0 1 8.600 0zM284.500 333.300h9.600v1h-9.600zM285.500 335h7.600v1.600h-7.600z"/>
<rect x="304" y="328" width="7" height="7"/><rect x="302" y="330" width="7" height="7" fill="#232323"/><rect x="302.500" y="330.500" width="6" height="6" fill="none" stroke="#c8c8c8" stroke-width="1"/>
<rect x="318.500" y="329.800" width="10" height="5" rx="2.500" transform="rotate(-35 323.500 332.300)"/>
</g>
<g fill="none" stroke="#c8c8c8" stroke-width="1"><rect x="340.500" y="328.500" width="9" height="7.500" rx="1"/><path d="M341.500 329.500c3 0 4 5.500 7 5.500"/><path d="M342.500 327.500v1M347.500 327.500v1"/></g>
<!-- column header icons -->
<g fill="#c8c8c8">
<path d="M16.500 350c1.500-2.400 5.500-2.400 7 0c-1.500 2.400-5.500 2.400-7 0z"/><circle cx="20" cy="350" r="1.100" fill="#262626"/>
<path d="M26.800 348.800h1.400l2-1.800v6l-2-1.800h-1.400z"/><path d="M31.200 348a3 3 0 0 1 0 4M32.300 347a4.500 4.500 0 0 1 0 6" fill="none" stroke="#c8c8c8" stroke-width=".7"/>
<circle cx="38.800" cy="350" r="1.700"/>
<rect x="46" y="349.300" width="4.600" height="3.600"/><path d="M47 349.300v-1.200a1.300 1.300 0 0 1 2.600 0v1.200" fill="none" stroke="#c8c8c8" stroke-width=".9"/>
<path d="M65.500 346.700h3.400l3.600 3.600l-3.100 3.100l-3.900-3.600z"/><circle cx="67.200" cy="348.400" r=".7" fill="#262626"/>
</g>
<path d="M56.800 345.500v9M98.400 345.500v9M187.100 345.500v9M274.500 345.500v9M350.400 345.500v9" stroke="#3a3a3a" stroke-width="1"/>
<!-- switch header icons -->
<g fill="#c8c8c8" stroke="#c8c8c8" stroke-width=".8">
<path d="M191 350a3 2.600 0 0 1 6 0zM190.300 350.800h7.400M192 352.500h1.200M195 352.500h1.200M194 347v6" fill="none"/>
<path d="M203.600 346.800v6.400M200.400 350h6.400M201.400 347.800l4.400 4.400M205.800 347.800l-4.400 4.400" stroke-width=".6"/><circle cx="203.600" cy="350" r="1" stroke="none"/>
<path d="M210 346.800l6 6.500" fill="none" stroke-width="1"/>
<rect x="228.500" y="347" width="7.600" height="6" fill="none"/><rect x="230.200" y="348.500" width="4.200" height="3" stroke="none"/>
<rect x="238.500" y="348" width="7.500" height="4" rx="2" transform="rotate(-35 242.200 350)" stroke="none"/>
<circle cx="251.500" cy="350" r="3" fill="none"/><path d="M251.500 347a3 3 0 0 1 0 6z" stroke="none"/>
<ellipse cx="261.600" cy="350" rx="3" ry="2.400" fill="none"/><path d="M261.600 347.600v4.800" fill="none"/>
</g>
<!-- layer row cells -->
<g fill="#232323">
<rect x="35" y="357.600" width="7.800" height="9.300"/><rect x="44.600" y="357.600" width="7.800" height="9.300"/>
<rect x="189.600" y="357.600" width="8.600" height="9.300"/><rect x="199.800" y="357.600" width="8.400" height="9.300"/><rect x="209.400" y="357.600" width="8.400" height="9.300"/>
<rect x="238" y="357.600" width="8.800" height="9.300"/><rect x="247.800" y="357.600" width="8.600" height="9.300"/><rect x="257.400" y="357.600" width="8.600" height="9.300"/>
<rect x="290.200" y="357.300" width="57.200" height="10" fill="#1d1d1d"/>
</g>
<g fill="#303030">
<rect x="35" y="369.700" width="7.800" height="9.300"/><rect x="44.600" y="369.700" width="7.800" height="9.300"/>
<rect x="189.600" y="369.700" width="8.600" height="9.300"/><rect x="199.800" y="369.700" width="8.400" height="9.300"/><rect x="209.400" y="369.700" width="8.400" height="9.300"/>
<rect x="238" y="369.700" width="8.800" height="9.300"/><rect x="247.800" y="369.700" width="8.600" height="9.300"/><rect x="257.400" y="369.700" width="8.600" height="9.300"/>
<rect x="290.200" y="369.300" width="57.200" height="10" fill="#1d1d1d"/>
</g>
<g fill="#e0e0e0">
<path d="M16.500 362.300c1.500-2.400 5.500-2.400 7 0c-1.500 2.400-5.500 2.400-7 0z"/><circle cx="20" cy="362.300" r="1.100" fill="#2b2b2b"/>
<path d="M16.500 374.300c1.500-2.400 5.500-2.400 7 0c-1.500 2.400-5.500 2.400-7 0z"/><circle cx="20" cy="374.300" r="1.100" fill="#3b3b3b"/>
</g>
<path d="M60.500 360l2.300 2.300l-2.300 2.300" fill="none" stroke="#a8a8a8" stroke-width="1"/>
<path d="M59.300 373.200l2.300 2.300l2.300-2.300" fill="none" stroke="#a8a8a8" stroke-width="1"/>
<rect x="68" y="358" width="8.300" height="8.700" fill="#7c8ee6"/>
<rect x="68" y="370" width="8.300" height="8.700" fill="#b3b1df"/>
<path d="M104.900 358.600l1.050 2.300l2.500.3l-1.850 1.700l.5 2.500l-2.200-1.250l-2.200 1.250l.5-2.500l-1.850-1.700l2.500-.3z" fill="#d8d8d8"/>
<rect x="102.400" y="369.600" width="6.200" height="9.400" rx=".8" fill="#3a1a06" stroke="#e8791d" stroke-width=".7"/>
<rect x="111.800" y="369.600" width="74.600" height="9.600" fill="#2a2a2a" stroke="#a8a8a8" stroke-width="1"/>
<!-- row switches -->
<g fill="none" stroke="#c8c8c8" stroke-width=".8">
<path d="M191 362.600a3 2.600 0 0 1 6 0zM190.300 363.400h7.400M192 365.100h1.200M195 365.100h1.200M194 359.600v6"/>
<path d="M191 374.600a3 2.600 0 0 1 6 0zM190.300 375.400h7.400M192 377.100h1.200M195 377.100h1.200M194 371.600v6"/>
<path d="M210.500 365.500l6-6.500M210.500 377.500l6-6.500" stroke-width="1.100"/>
</g>
<g stroke="#6a6a6a" stroke-width=".6" fill="#6a6a6a"><path d="M204 359.300v6M201 362.300h6M201.900 360.200l4.200 4.200M206.100 360.200l-4.200 4.200"/><circle cx="204" cy="362.300" r="1" stroke="none"/></g>
<!-- pickwhips -->
<g fill="none" stroke="#a8a8a8" stroke-width=".9">
<path id="pw" d="M284.54 359.57 L285.12 360.13 L285.55 360.79 L285.82 361.51 L285.91 362.25 L285.84 362.98 L285.61 363.67 L285.24 364.28 L284.75 364.79 L284.16 365.19 L283.52 365.45 L282.84 365.56 L282.16 365.54 L281.53 365.39 L280.95 365.11 L280.46 364.73 L280.08 364.27 L279.81 363.75 L279.68 363.21 L279.67 362.66 L279.78 362.14 L280.00 361.67 L280.32 361.26 L280.71 360.94 L281.15 360.71 L281.62 360.58 L282.10 360.55 L282.55 360.62 L282.97 360.78 L283.33 361.01 L283.61 361.30 L283.82 361.63 L283.94 361.98 L283.98 362.34 L283.93 362.68 L283.81 362.99 L283.63 363.26 L283.40 363.47 L283.14 363.62 L282.86 363.71 L282.58 363.74 L282.32 363.71 L282.09 363.62 L281.89 363.50 L281.73 363.34 L281.63 363.17 L281.58 362.99 L281.57 362.82 L281.60 362.66"/>
<use href="#pw" y="12"/><use href="#pw" x="9" y="35.800"/><use href="#pw" x="9" y="47.900"/><use href="#pw" x="9" y="60"/><use href="#pw" x="9" y="72.100"/><use href="#pw" x="9" y="84.200"/>
</g>
<path d="M340 361.200l2.200 2.200l2.200-2.200M340 373.200l2.200 2.200l2.200-2.200" fill="none" stroke="#b0b0b0" stroke-width="1"/>
<!-- property rows: separators -->
<path d="M361.500 380.500H737M361.500 392.400H737M361.500 404.600H737M361.500 416.800H737M361.500 429H737M361.500 441.200H737M361.500 453.300H737" stroke="#272727" stroke-width="1.200"/>
<path d="M13 392.400h347M13 404.600h347M13 416.800h347M13 429h347M13 441.200h347M13 453.300h347" stroke="#1f1f1f" stroke-width=".8"/>
<path d="M73.200 385.500l2.300 2.300l2.300-2.300" fill="none" stroke="#a8a8a8" stroke-width="1"/>
<!-- stopwatches -->
<g fill="none" stroke="#c0c0c0" stroke-width="1">
<g id="sw"><circle cx="98.500" cy="399.300" r="2.800"/><path d="M97.300 395.300h2.400M98.500 395.500v1.200M100.800 396.800l.8-.8"/></g>
<use href="#sw" y="24.100"/><use href="#sw" y="35.600"/><use href="#sw" y="47.700"/>
</g>
<g fill="none" stroke="#2d8ceb" stroke-width="1"><circle cx="98.500" cy="411.400" r="2.800"/><path d="M97.300 407.400h2.400M98.500 407.600v1.200M100.800 408.900l.8-.8M98.500 411.400v-1.800"/></g>
<path d="M107.500 408v6.500h6.500M108.500 413l2-2.500l1.500 1l2-2.500" fill="none" stroke="#b8b8b8" stroke-width=".9"/>
<!-- keyframe nav -->
<path d="M22.300 408.800v5l-3.300-2.500zM36.500 408.800v5l3.300-2.500z" fill="#d0d0d0"/>
<path d="M29.500 408.800l2.400 2.500l-2.400 2.500l-2.400-2.500z" fill="none" stroke="#a8a8a8" stroke-width=".9"/>
<!-- link icon -->
<g fill="none" stroke="#c8c8c8" stroke-width="1.200"><rect x="190.200" y="421.300" width="4.600" height="3" rx="1.500"/><rect x="193" y="421.300" width="4.600" height="3" rx="1.500"/></g>
<!-- bottom bar icons -->
<rect x="13.500" y="475.500" width="11.500" height="11" fill="#1a1a1a"/>
<g fill="none" stroke="#2d8ceb" stroke-width="1"><path d="M16 478.500l2.500-1l2 2.500l-2.500 1zM18.500 481.500l2.500-1l2 2.500l-2.500 1zM16 478.500v2.500l2.500 3M20.500 480v1"/></g>
<g fill="none" stroke="#c8c8c8" stroke-width="1"><circle cx="31.500" cy="480" r="2.700"/><rect x="32.300" y="481" width="4" height="4" fill="#232323"/></g>
<g fill="#c8c8c8"><rect x="42.800" y="477" width="1" height="8"/><rect x="47.200" y="477" width="1" height="8"/><rect x="44" y="478.500" width="3" height="5" fill="#8a8a8a"/></g>
<g fill="#c8c8c8"><circle cx="57" cy="479.500" r="2.600"/><path d="M53.500 484.500c0-2.500 7-2.500 7 0z"/><path d="M60 478.500h2.500v1.500h-2.500z" fill="#8a8a8a"/></g>
<rect x="192.600" y="476.300" width="85.800" height="9.700" fill="#2b2b2b" stroke="#1a1a1a" stroke-width=".8"/>
<rect x="361.500" y="356.500" width="3.900" height="117.500" fill="#292929"/>
<!-- TRACK -->
<defs><linearGradient id="l2g" x1="0" x2="0" y1="0" y2="1"><stop offset="0" stop-color="#c2c0e0"/><stop offset=".15" stop-color="#adabd2"/><stop offset=".8" stop-color="#9f9dc6"/><stop offset="1" stop-color="#8482aa"/></linearGradient></defs>
<rect x="361.800" y="324" width="374.500" height="7.200" rx="3.400" fill="#1b1b1b"/><rect x="365" y="325.200" width="336.500" height="4.900" fill="#6b6b6b"/>
<path d="M704.500 325.200h27a2.400 2.400 0 0 1 0 4.900h-27z" fill="#46413a"/>
<path d="M365 325.200h-1.200a2.400 2.400 0 0 0 0 4.900h1.200z" fill="#2d8ceb"/>
<rect x="701.500" y="325.200" width="3.200" height="4.900" rx="1" fill="#2d8ceb"/>
<g stroke="#9a9a9a" stroke-width="1"><path d="M365.700 338.700v3.800M416 338.700v3.800M466.300 338.700v3.800M516.700 338.700v3.800M567 338.700v3.800M617.400 338.700v3.800M667.700 338.700v3.800M718.100 338.700v3.800"/></g>
<rect x="365.200" y="343.900" width="371.800" height="9.200" fill="#626262"/>
<path d="M365.200 343.900h-1.400a2.200 2.200 0 0 0 -2.200 2.200v4.800a2.200 2.200 0 0 0 2.200 2.200h1.400z" fill="#2d8ceb"/>
<rect x="365.200" y="353.100" width="371.800" height="3.600" fill="#1c2a1c"/><rect x="365.200" y="353.700" width="371.800" height="2.400" fill="#14c622"/>
<rect x="365.500" y="357.200" width="371.500" height="10.200" fill="#515f93"/><rect x="365.500" y="357.200" width="371.500" height=".9" fill="#6474a8"/><rect x="365.500" y="366.600" width="371.500" height=".8" fill="#3c4874"/>
<rect x="365.500" y="369" width="371.500" height="10.600" fill="url(#l2g)"/>
<!-- I-beams -->
<!-- keyframes -->
<g fill="#6e7680" stroke="#2d8ceb" stroke-width="1.500" stroke-linejoin="round"><path id="kf" d="M365.200 407l3.500 3.900l-3.500 3.900l-3.500-3.900z"/><use href="#kf" x="6.300"/><use href="#kf" x="14.100"/><use href="#kf" x="20.800"/></g>
<g fill="#c8c8c8"><circle cx="365.200" cy="410.900" r="1.500"/><circle cx="371.500" cy="410.900" r="1.500"/><circle cx="379.300" cy="410.900" r="1.500"/><circle cx="386" cy="410.900" r="1.500"/></g>
<!-- playhead -->
<path d="M376.500 325v149" stroke="#3590ee" stroke-width="1.200"/>
<path d="M372.600 334.300h7.800v3.700l-3.900 4.200l-3.900-4.200z" fill="#2d8ceb"/>
<g stroke="#cfd6de" stroke-width="1.200" fill="none"><g id="ib"><path d="M376.500 383.300v6.600" stroke="#a4c8ee"/><path d="M374.300 383.200h4.500M374.300 389.900h4.500"/></g><use href="#ib" y="12"/><use href="#ib" y="36.400"/><use href="#ib" y="48.500"/><use href="#ib" y="60.600"/></g>
<!-- markers right -->
<path d="M739.800 344.800h7v6l-3.500 3.400l-3.500-3.400z" fill="#c0c0c0"/>
<g fill="none" stroke="#c0c0c0" stroke-width="1"><path d="M741.500 359h5v5l-2.500 2.500l-2.500-2.500zM738.500 362l2.500-3M738.500 362l2 3"/></g>
<!-- bottom zoom -->
<path d="M365.500 482l2.200-2.400l2.200 2.400z" fill="#c8c8c8"/>
<path d="M383 481h26" stroke="#4a4a4a" stroke-width="1"/><circle cx="383" cy="481" r="2.300" fill="#232323" stroke="#c8c8c8" stroke-width="1.100"/>
<path d="M416.500 483l3-3.600l1.700 2l1.300-1.600l2.700 3.200z" fill="#c8c8c8"/>
<rect x="431" y="475.800" width="278" height="9.200" rx="4.600" fill="#303030"/>
</svg>
<div id="t63" class="t" style="left:30.5px;top:307px;color:#9a9a9a;font-size:8.500px;transform:scaleX(0.686)">レンダーキュー</div>
<div id="t64" class="t" style="left:121.0px;top:307px;color:#d0d0d0;font-size:8.500px;transform:scaleX(0.693)">コンポ 1</div>
<div class="t blue" style="left:24px;top:323px;font-size:10.500px;font-weight:bold;transform:scaleX(.92)" id="tc">0;00;01;03</div>
<div class="t" style="left:20px;top:333px;color:#1f5d9e;font-size:8px;transform:scaleX(.9)" id="tc2">00033 (29.97 fps)</div>
<div id="t67" class="t" style="left:83px;top:345.200px;color:#c0c0c0;font-size:7px;font-style:italic">#</div>
<div id="t68" class="t" style="left:102.8px;top:345.200px;color:#c0c0c0;font-size:8.500px;transform:scaleX(0.809)">レイヤー名</div>
<div id="t69" class="t" style="left:219.300px;top:345px;color:#c8c8c8;font-size:8.500px;font-style:italic;font-family:'Liberation Serif',serif;transform:scaleX(.9)">fx</div>
<div id="t70" class="t" style="left:279.1px;top:345.200px;color:#c0c0c0;font-size:8.500px;transform:scaleX(0.731)">親とリンク</div>
<div id="t71" class="t" style="left:83px;top:357.300px;color:#c0c0c0;font-size:8.500px">1</div>
<div id="t72" class="t" style="left:113.5px;top:357.300px;color:#c8c8c8;font-size:8.500px;transform:scaleX(0.808)">シェイプレイヤー 1</div>
<div id="t73" class="t" style="left:294.6px;top:357.300px;color:#c8c8c8;font-size:8.500px;transform:scaleX(0.799)">なし</div>
<div id="t74" class="t" style="left:83px;top:369.300px;color:#c0c0c0;font-size:8.500px">2</div>
<div id="t75" class="t" style="left:114.0px;top:369.300px;color:#d8d8d8;font-size:8.500px;transform:scaleX(0.873)">[char.ai]</div>
<div id="t76" class="t" style="left:103.300px;top:370.300px;color:#ffb04a;font-size:4.300px;font-weight:bold;line-height:6px;height:6px">Ai</div>
<div id="t77" class="t" style="left:294.6px;top:369.300px;color:#c8c8c8;font-size:8.500px;transform:scaleX(0.799)">なし</div>
<div id="t78" class="t" style="left:82.5px;top:382.400px;color:#c0c0c0;font-size:8.500px;transform:scaleX(0.814)">トランスフォーム</div>
<div id="t79" class="t blue" style="left:189.6px;top:382.400px;font-size:8.500px;transform:scaleX(.86)">ﾘｾｯﾄ</div>
<div id="t80" class="t" style="left:106.8px;top:394px;color:#c0c0c0;font-size:8.500px;transform:scaleX(0.761)">アンカーポイント</div>
<div id="t81" class="t blue" style="left:190.8px;top:394px;font-size:8.500px;transform:scaleX(0.791)">320.0,320.0</div>
<div id="t82" class="t" style="left:118.8px;top:406px;color:#c8c8c8;font-size:8.500px;transform:scaleX(0.882)">位置</div>
<div id="t83" class="t blue" style="left:190.8px;top:406px;font-size:8.500px;transform:scaleX(0.800)">2073.2,1282.5</div>
<div id="t84" class="t" style="left:106.5px;top:418px;color:#c0c0c0;font-size:8.500px;transform:scaleX(0.838)">スケール</div>
<div id="t85" class="t blue" style="left:201.8px;top:418px;font-size:8.500px;transform:scaleX(0.785)">210.0,210.0<span style="color:#b0b0b0">%</span></div>
<div id="t86" class="t" style="left:106.3px;top:429.800px;color:#c0c0c0;font-size:8.500px;transform:scaleX(0.911)">回転</div>
<div id="t87" class="t blue" style="left:190.8px;top:429.800px;font-size:8.500px;transform:scaleX(0.883)">0<span style="color:#8a8a8a;font-size:7px">x</span>+0.0°</div>
<div id="t88" class="t" style="left:106.8px;top:441.800px;color:#c0c0c0;font-size:8.500px;transform:scaleX(0.888)">不透明度</div>
<div id="t89" class="t blue" style="left:190.8px;top:441.800px;font-size:8.500px;transform:scaleX(0.772)">100<span style="color:#b0b0b0">%</span></div>
<div id="t90" class="t" style="left:80.0px;top:476.200px;color:#b8b8b8;font-size:8.500px;transform:scaleX(0.725)">フレームレンダリング時間</div>
<div id="t91" class="t" style="left:159.0px;top:476.200px;color:#3fc88a;font-size:8px;transform:scaleX(0.793)">1ms</div>
<div id="t92" class="t" style="left:210.3px;top:476.200px;color:#8a8a8a;font-size:8.500px;transform:scaleX(0.770)">スイッチ / モード</div>
<div id="t93" class="t rl" style="left:361.4px;;transform:scaleX(0.782)">:00s</div>
<div id="t94" class="t rl" style="left:410.2px;;transform:scaleX(0.868)">05s</div>
<div id="t95" class="t rl" style="left:460.5px;;transform:scaleX(0.868)">10s</div>
<div id="t96" class="t rl" style="left:510.9px;;transform:scaleX(0.868)">15s</div>
<div id="t97" class="t rl" style="left:561.2px;;transform:scaleX(0.868)">20s</div>
<div id="t98" class="t rl" style="left:611.6px;;transform:scaleX(0.868)">25s</div>
<div id="t99" class="t rl" style="left:661.9px;;transform:scaleX(0.868)">30s</div>
<div id="t100" class="t rl" style="left:712.3px;;transform:scaleX(0.868)">35s</div>
<!--TIMELINE-->
</div></div>
</body>
</html>
